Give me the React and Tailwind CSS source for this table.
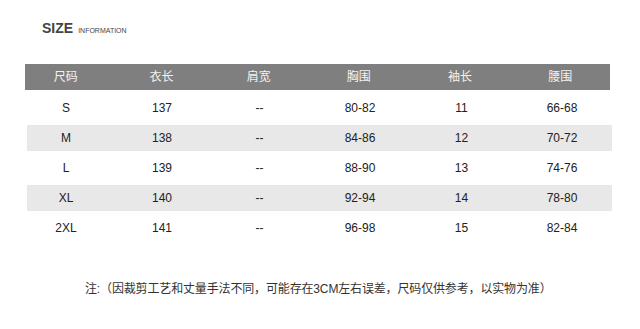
import React from "react";

const cols = ["w-[89px] pr-[7px]", "w-[96px]", "w-[99px]", "w-[102px]", "w-[101px]", "w-[100px]"];
const head = ["尺码", "衣长", "肩宽", "胸围", "袖长", "腰围"];
const rows = [
  ["S", "137", "--", "80-82", "11", "66-68"],
  ["M", "138", "--", "84-86", "12", "70-72"],
  ["L", "139", "--", "88-90", "13", "74-76"],
  ["XL", "140", "--", "92-94", "14", "78-80"],
  ["2XL", "141", "--", "96-98", "15", "82-84"],
];

export default function App() {
  return (
    <div
      className="w-[640px] h-[329px] bg-white overflow-hidden"
      style={{ fontFamily: '"Liberation Sans", "Noto Sans CJK SC", sans-serif' }}
    >
      <div className="flex h-[14px] items-baseline pl-[42px] mt-[21px] leading-[14px] text-[#444]">
        <span className="text-[14px] font-bold">SIZE</span>
        <span className="text-[7px] ml-[5px] text-[#444]">INFORMATION</span>
      </div>

      <div className="ml-[25px] mt-[29px] w-[587px]">
        <div className="flex h-[26px] w-[585px] items-center bg-[#7f7f7f] text-[12px] text-[#f2f2f2]">
          {head.map((h, i) => (
            <div key={i} className={`${cols[i]} text-center`}>{h}</div>
          ))}
        </div>
        <div className="mt-[3px]">
          {rows.map((r, ri) => (
            <div key={ri} className="h-[30px] flex items-center">
              <div
                className={`flex h-[26px] w-[587px] items-center text-[12px] text-[#222] ${
                  ri % 2 === 1 ? "bg-[#e8e8e8] ml-[2px]" : ""
                }`}
              >
                {r.map((c, i) => (
                  <div key={i} className={`${cols[i]} text-center ${ri % 2 === 1 && i === 0 ? "-ml-[2px]" : ""}`}>
                    {c}
                  </div>
                ))}
              </div>
            </div>
          ))}
        </div>
      </div>

      <div className="mt-[38px] pl-[85px] text-[12px] leading-[16px] tracking-[-0.15px] text-[#333]">
        注:（因裁剪工艺和丈量手法不同，可能存在3CM左右误差，尺码仅供参考，以实物为准）
      </div>
    </div>
  );
}
